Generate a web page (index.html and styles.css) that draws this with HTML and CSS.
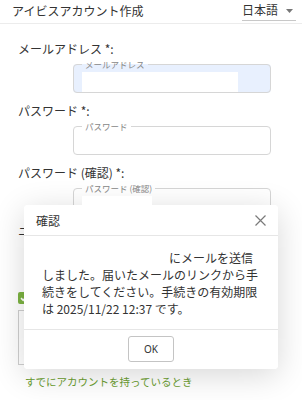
FILE: index.html
```html
<!DOCTYPE html>
<html lang="ja">
<head>
<meta charset="utf-8">
<title>アイビスアカウント作成</title>
<link rel="stylesheet" href="styles.css">
</head>
<body>
<header class="topbar">
  <div class="title">アイビスアカウント作成</div>
  <div class="lang">
    <span>日本語</span>
    <svg class="caret" width="7" height="4" viewBox="0 0 7 4"><path d="M0 0H7L3.5 4Z" fill="#777"/></svg>
  </div>
</header>
<main class="form">
  <div class="field">
    <div class="label">メールアドレス *:</div>
    <fieldset class="box filled"><legend>メールアドレス</legend><div class="value"><span class="mask mask-email"></span></div></fieldset>
  </div>
  <div class="field">
    <div class="label">パスワード *:</div>
    <fieldset class="box"><legend>パスワード</legend><div class="value"></div></fieldset>
  </div>
  <div class="field">
    <div class="label">パスワード (確認) *:</div>
    <fieldset class="box"><legend>パスワード (確認)</legend><div class="value"><span class="mask mask-pw"></span></div></fieldset>
  </div>
  <div class="field">
    <div class="label label-clip">ニ</div>
    <div class="box box-plain"><div class="value"></div></div>
  </div>
  <div class="agree">
    <span class="check"><svg width="12" height="12" viewBox="0 0 12 12"><path d="M3 6.2L5.2 8.3L9.2 3.8" fill="none" stroke="#fff" stroke-width="1.6"/></svg></span>
  </div>
  <div class="terms-box"></div>
  <a class="login-link" href="#">すでにアカウントを持っているとき</a>
</main>

<div class="overlay">
  <div class="dialog">
    <div class="dialog-shadow"></div>
    <div class="dialog-box">
      <div class="dialog-head">
        <span>確認</span>
        <svg class="close" width="11" height="11" viewBox="0 0 11 11"><path d="M0.5 0.5L10.5 10.5M10.5 0.5L0.5 10.5" stroke="#7a7a7a" stroke-width="1.2"/></svg>
      </div>
      <div class="dialog-body"><span class="redact"></span>にメールを送信しました。届いたメールのリンクから手続きをしてください。手続きの有効期限は 2025/11/22 12:37 です。</div>
      <div class="dialog-foot">
        <button class="ok" type="button">OK</button>
      </div>
    </div>
  </div>
</div>
</body>
</html>
```
FILE: styles.css
```css
html, body {
  margin: 0;
  padding: 0;
  background: #fff;
}
body {
  font-family: "Noto Sans CJK JP", "Noto Sans", sans-serif;
  color: #333;
  font-size: 12px;
  width: 302px;
  height: 400px;
  overflow: hidden;
  position: relative;
}
.topbar {
  display: flex;
  justify-content: space-between;
  align-items: flex-start;
  height: 23px;
  border-bottom: 1px solid #ececec;
  padding: 0 6px 0 12px;
}
.title {
  font-size: 12px;
  line-height: 22px;
}
.lang {
  display: flex;
  align-items: center;
  gap: 8px;
  height: 21px;
  padding-right: 3px;
  border-bottom: 1px solid #c8c8c8;
  box-sizing: border-box;
  line-height: 20px;
}
.caret {
  display: block;
  margin-top: 1px;
}
.form {
  padding: 16px 0 0 18px;
  display: flex;
  flex-direction: column;
  align-items: flex-start;
}
.field {
  margin-bottom: 9px;
}
.label {
  line-height: 18px;
  margin-bottom: 1px;
}
.label-clip {
  margin-top: -4px;
  margin-bottom: 5px;
}
.box {
  margin: 0 0 0 55px;
  padding: 0;
  min-width: 0;
  width: 198px;
  box-sizing: border-box;
  border: 1px solid #d6d6d6;
  border-radius: 4px;
}
.box-plain {
  height: 29px;
  margin-top: 5px;
}
.box legend {
  font-size: 8.5px;
  line-height: 10px;
  color: #888;
  padding: 0 3px;
  margin-left: 8px;
}
.filled {
  background: #e8f0fe;
}
.value {
  height: 20px;
  margin-top: 3px;
  padding-left: 8px;
}
.mask {
  display: block;
  height: 20px;
  background: #fff;
  position: relative;
  z-index: 2;
}
.mask-email { width: 156px; }
.mask-pw { width: 70px; }
.agree {
  display: flex;
  align-items: center;
  margin-top: 9px;
  height: 12px;
}
.check {
  width: 12px;
  height: 12px;
  background: #7cb342;
  border-radius: 2px;
  display: block;
}
.check svg { display: block; }
.terms-box {
  margin-top: 6px;
  width: 220px;
  height: 55px;
  box-sizing: border-box;
  border: 1px solid #cfcfcf;
}
.login-link {
  margin: 9px 0 0 7px;
  font-size: 10.5px;
  line-height: 16px;
  color: #6b9e30;
  text-decoration: none;
}
.overlay {
  position: absolute;
  left: 0;
  top: 0;
  right: 0;
  bottom: 0;
  display: flex;
  justify-content: center;
  align-items: flex-start;
  padding-top: 205px;
}
.dialog {
  position: relative;
  width: 254px;
}
.dialog-shadow {
  position: absolute;
  inset: 0;
  border-radius: 4px;
  box-shadow: 0 6px 32px rgba(0, 0, 0, 0.16);
  z-index: 1;
}
.dialog-box {
  position: relative;
  z-index: 3;
  background: #fff;
  border-radius: 4px;
}
.dialog-head {
  height: 30px;
  border-bottom: 1px solid #e6e6e6;
  display: flex;
  align-items: center;
  justify-content: space-between;
  padding: 0 12px;
}
.close { display: block; }
.dialog-body {
  padding: 13px 18px 12px;
  line-height: 17px;
  font-size: 12px;
}
.redact {
  display: inline-block;
  width: 127px;
  height: 1px;
}
.dialog-foot {
  border-top: 1px solid #e6e6e6;
  padding: 6px 0 7px;
  display: flex;
  justify-content: center;
}
.ok {
  width: 46px;
  height: 26px;
  background: #fff;
  border: 1px solid #c4c4c4;
  border-radius: 3px;
  font-family: "Noto Sans", sans-serif;
  font-size: 10px;
  color: #333;
  padding: 0;
}
```
